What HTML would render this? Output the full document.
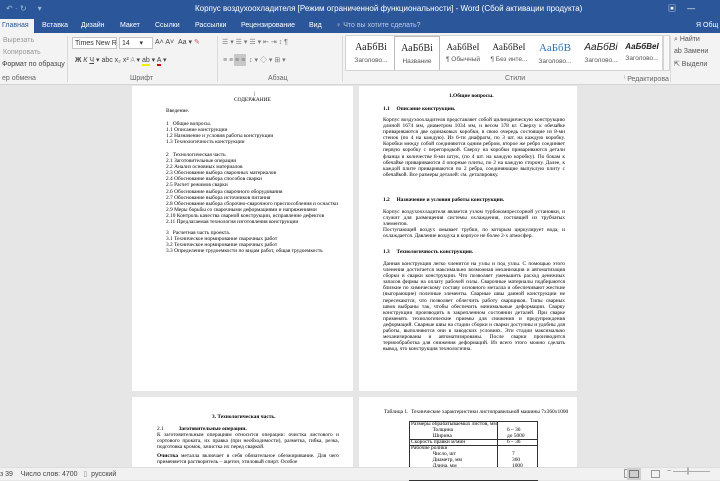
<!DOCTYPE html>
<html><head><meta charset="utf-8"><style>
*{margin:0;padding:0;box-sizing:border-box}
body{width:720px;height:480px;overflow:hidden;background:#e6e6e6;font-family:"Liberation Sans","Noto Sans CJK SC",sans-serif;position:relative}
.a{position:absolute;white-space:nowrap}
#title{position:absolute;left:0;top:0;width:720px;height:33px;background:#2b579a}
#ribbon{position:absolute;left:0;top:33px;width:720px;height:52px;background:#f3f3f3;border-bottom:1px solid #d5d5d5}
.w{color:#fff;font-size:8px}
.r{color:#444;font-size:7px}
.g{color:#666;font-size:7px}
.page{position:absolute;background:#fff;font-family:"Liberation Serif",serif;color:#000;font-size:5.4px;line-height:6.1px}
.page p{position:absolute;white-space:nowrap}
.j{white-space:normal!important;text-align:justify;text-align-last:left}
.b{font-weight:bold}
#status{position:absolute;left:0;top:467px;width:720px;height:13px;background:#f1f1f1;border-top:1px solid #ddd;font-size:7px;color:#444}
.sty{position:absolute;top:0;width:46px;height:36px;text-align:center;overflow:hidden;white-space:nowrap}
.sty .s1{font-family:"Liberation Serif",serif;font-size:10px;margin-top:6px;color:#222}
.sty .s2{font-size:6.5px;color:#555;margin-top:4px}
.sep{position:absolute;top:36px;width:1px;height:46px;background:#dadada}
.box{position:absolute;background:#fff;border:1px solid #c6c6c6;font-size:7px;color:#333;padding:1px 2px;white-space:nowrap;overflow:hidden}
</style></head><body>
<div id="title">
<div class="a w" style="left:6px;top:4px;color:#9fb5d8">↶ · ↻ &nbsp;&nbsp;&nbsp; ▾</div>
<div class="a w" style="left:195px;top:4px">Корпус воздухоохладителя [Режим ограниченной функциональности] - Word (Сбой активации продукта)</div>
<div class="a w" style="left:668px;top:3px">▣ &nbsp;&nbsp;&nbsp;&nbsp;—</div>
<div class="a" style="left:0;top:19px;width:34px;height:14px;background:#f3f3f3"></div>
<div class="a" style="left:2px;top:22px;font-size:7px;color:#2b579a">Главная</div>
<div class="a w" style="left:42px;top:22px;font-size:7px">Вставка</div>
<div class="a w" style="left:81px;top:22px;font-size:7px">Дизайн</div>
<div class="a w" style="left:120px;top:22px;font-size:7px">Макет</div>
<div class="a w" style="left:155px;top:22px;font-size:7px">Ссылки</div>
<div class="a w" style="left:195px;top:22px;font-size:7px">Рассылки</div>
<div class="a w" style="left:241px;top:22px;font-size:7px">Рецензирование</div>
<div class="a w" style="left:309px;top:22px;font-size:7px">Вид</div>
<div class="a w" style="left:336px;top:22px;font-size:7px;color:#bccbe4">♀ Что вы хотите сделать?</div>
<div class="a w" style="left:696px;top:22px;font-size:7px">Я Общ</div>
</div>
<div id="ribbon">
<div class="a g" style="left:3px;top:4px;color:#999">Вырезать</div>
<div class="a g" style="left:3px;top:16px;color:#999">Копировать</div>
<div class="a r" style="left:2px;top:28px">Формат по образцу</div>
<div class="box" style="left:72px;top:4px;width:45px;height:12px">Times New R ▾</div>
<div class="box" style="left:119px;top:4px;width:34px;height:12px">14 &nbsp;&nbsp;&nbsp;&nbsp;▾</div>
<div class="a r" style="left:155px;top:5px;font-size:7px">A˄ A˅ &nbsp;Aa ▾ <span style="color:#c55">✎</span></div>
<div class="a r" style="left:75px;top:23px;font-size:7px"><b>Ж</b> <i>К</i> <u>Ч</u> ▾ abc x₂ x² <span style="color:#aaa">A</span> ▾ <span style="border-bottom:2px solid #ee0">ab</span> ▾ <span style="border-bottom:2px solid #d00">A</span> ▾</div>
<div class="a r" style="left:222px;top:5px;font-size:7px;color:#777">☰ ▾ ☰ ▾ ☰ ▾ ⇤ ⇥ ↕ ¶</div>
<div class="a" style="left:234px;top:21px;width:12px;height:12px;background:#c8c8c8"></div>
<div class="a r" style="left:223px;top:22px;font-size:7px;color:#777">≡ ≡ ≡ ≡ &nbsp;↕ ▾ ◇ ▾ ⊞ ▾</div>
<div class="a" style="left:345px;top:2px;width:318px;height:36px;background:#fff;border:1px solid #d4d4d4;overflow:hidden">
<div class="sty" style="left:2px"><div class="s1">АаБбВі</div><div class="s2">Заголово...</div></div>
<div class="sty" style="left:48px;border:1px solid #bbb"><div class="s1">АаБбВі</div><div class="s2">Название</div></div>
<div class="sty" style="left:94px"><div class="s1" style="font-size:9px">АаБбВеІ</div><div class="s2">¶ Обычный</div></div>
<div class="sty" style="left:140px"><div class="s1" style="font-size:9px">АаБбВеІ</div><div class="s2">¶ Без инте...</div></div>
<div class="sty" style="left:186px"><div class="s1" style="color:#2e74b5;font-size:11px">АаБбВ</div><div class="s2">Заголово...</div></div>
<div class="sty" style="left:232px"><div class="s1" style="font-family:'Liberation Sans';font-style:italic">АаБбВі</div><div class="s2">Заголово...</div></div>
<div class="sty" style="left:276px;width:40px"><div class="s1" style="font-family:'Liberation Sans';font-style:italic;font-weight:bold;font-size:8px">АаБбВеІ</div><div class="s2">Заголово...</div></div>
</div>
<div class="a" style="left:663px;top:2px;width:7px;height:36px;border:1px solid #d4d4d4;background:#f8f8f8"></div>
<div class="a r" style="left:674px;top:3px;color:#555">⌕ Найти</div>
<div class="a r" style="left:674px;top:15px;color:#555">ab Замени</div>
<div class="a r" style="left:674px;top:27px;color:#555">⇱ Выдели</div>
<div class="a g" style="left:2px;top:42px">ер обмена</div>
<div class="a g" style="left:130px;top:42px">Шрифт</div>
<div class="a g" style="left:268px;top:42px">Абзац</div>
<div class="a g" style="left:505px;top:42px">Стили</div>
<div class="a g" style="left:624px;top:42px">ⁱ Редактирова</div>
</div>
<div class="sep" style="left:67px;top:36px"></div>
<div class="sep" style="left:217px;top:36px"></div>
<div class="sep" style="left:342px;top:36px"></div>
<div class="sep" style="left:670px;top:36px"></div>

<div class="page" style="left:132px;top:86px;width:221px;height:305px">
<p style="left:122px;top:5px">|</p>
<p style="left:102px;top:11px">СОДЕРЖАНИЕ</p>
<p style="left:34px;top:22px">Введение.</p>
<p style="left:34px;top:35px">1 &nbsp;&nbsp;Общие вопросы.<br>1.1 Описание конструкции<br>1.2 Назначение и условия работы конструкции<br>1.3 Технологичность конструкции</p>
<p style="left:34px;top:66px">2 &nbsp;&nbsp;Технологическая часть<br>2.1 Заготовительные операции<br>2.2 Анализ основных материалов<br>2.3 Обоснование выбора сварочных материалов<br>2.4 Обоснование выбора способов сварки<br>2.5 Расчет режимов сварки<br>2.6 Обоснование выбора сварочного оборудования<br>2.7 Обоснование выбора источников питания<br>2.8 Обоснование выбора сборочно-сварочного приспособления и оснастки<br>2.9 Меры борьбы со сварочными деформациями и напряжениями<br>2.10 Контроль качества сварной конструкции, исправление дефектов<br>2.11 Предлагаемая технология изготовления конструкции</p>
<p style="left:34px;top:144px">3 &nbsp;&nbsp;Расчетная часть проекта.<br>3.1 Техническое нормирование сварочных работ<br>3.2 Техническое нормирование сварочных работ<br>3.3 Определение трудоемкости по видам работ, общая трудоемкость</p>
</div>

<div class="page" style="left:359px;top:86px;width:218px;height:305px">
<p class="b" style="left:90px;top:7px">1.Общие вопросы.</p>
<p class="b" style="left:24px;top:20px">1.1 &nbsp;&nbsp;&nbsp;&nbsp;Описание конструкции.</p>
<p class="j" style="left:24px;top:31px;width:182px">Корпус воздухоохладителя представляет собой цилиндрическую конструкцию длиной 1674 мм, диаметром 1034 мм, и весом 378 кг. Сверху к обечайке привариваются две одинаковых коробки, в свою очередь состоящие из 8-ми стенок (по 4 на каждую). Из 6-ти диафрагм, по 3 шт. на каждую коробку. Коробки между собой соединяются одним ребром, второе же ребро соединяет первую коробку с перегородкой. Сверху на коробки привариваются детали фланца в количестве 8-ми штук, (по 4 шт. на каждую коробку). По бокам к обечайке привариваются 4 опорные плиты, по 2 на каждую сторону. Далее, к каждой плите привариваются по 2 ребра, соединяющие выпуклую плиту с обечайкой. Все размеры деталей: см. деталировку.</p>
<p class="b" style="left:24px;top:111px">1.2 &nbsp;&nbsp;&nbsp;&nbsp;Назначение и условия работы конструкции.</p>
<p class="j" style="left:24px;top:123px;width:182px">Корпус воздухоохладителя является узлом турбокомпрессорной установки, и служит для размещения системы охлаждения, состоящей из трубчатых элементов.<br>Поступающий воздух омывает трубки, по которым циркулирует вода, и охлаждается. Давление воздуха в корпусе не более 2-х атмосфер.</p>
<p class="b" style="left:24px;top:163px">1.3 &nbsp;&nbsp;&nbsp;&nbsp;Технологичность конструкции.</p>
<p class="j" style="left:24px;top:175px;width:182px">Данная конструкция легко членится на узлы и под узлы. С помощью этого членения достигается максимально возможная механизация и автоматизация сборки и сварки конструкции. Что позволяет уменьшить расход денежных запасов фирмы на оплату рабочей силы. Сварочные материалы подбираются близкие по химическому составу основного металла и обеспечивают жесткие (выгорающие) полезные элементы. Сварные швы данной конструкции не пересекаются, что позволяет облегчить работу сварщиков. Типы сварных швов выбраны так, чтобы обеспечить минимальные деформации. Сварку конструкции производить в закрепленном состоянии деталей. При сварке применять технологические приемы для снижения и предупреждения деформаций. Сварные швы на стадии сборки и сварки доступны и удобны для работы, выполняются они в заводских условиях. Эти стадии максимально механизированы и автоматизированы. После сварки производится термообработка для снижения деформаций. Из всего этого можно сделать вывод, что конструкция технологична.</p>
</div>

<div class="page" style="left:132px;top:397px;width:221px;height:80px">
<p class="b" style="left:80px;top:17px">3. Технологическая часть.</p>
<p style="left:25px;top:29px">2.1 &nbsp;&nbsp;&nbsp;&nbsp;&nbsp;&nbsp;&nbsp;&nbsp;&nbsp;&nbsp;<b>Заготовительные операции.</b></p>
<p class="j" style="left:25px;top:35px;width:182px">К заготовительным операциям относится операции: очистка листового и сортового проката, их правка (при необходимости), разметка, гибка, резка, подготовка кромок, зачистка их перед сваркой.</p>
<p class="j" style="left:25px;top:56px;width:182px"><b>Очистка</b> металла включает в себя обязательное обезжиривание. Для чего применяется растворитель – ацетон, этиловый спирт. Особое</p>
</div>

<div class="page" style="left:359px;top:397px;width:218px;height:80px">
<p style="left:25px;top:12px">Таблица 1. &nbsp;Технические характеристики листоправильной машины 7x360x1000</p>
<div style="position:absolute;left:50px;top:24px;width:129px;height:60px;border:1px solid #333"></div>
<div style="position:absolute;left:138px;top:24px;width:1px;height:60px;background:#333"></div>
<div style="position:absolute;left:50px;top:42px;width:129px;height:1px;background:#333"></div>
<div style="position:absolute;left:50px;top:48px;width:129px;height:1px;background:#333"></div>
<p style="left:52px;top:24px">Размеры обрабатываемых листов, мм<br>&nbsp;&nbsp;&nbsp;&nbsp;&nbsp;&nbsp;&nbsp;&nbsp;&nbsp;&nbsp;&nbsp;&nbsp;&nbsp;&nbsp;&nbsp;&nbsp;Толщина<br>&nbsp;&nbsp;&nbsp;&nbsp;&nbsp;&nbsp;&nbsp;&nbsp;&nbsp;&nbsp;&nbsp;&nbsp;&nbsp;&nbsp;&nbsp;&nbsp;Ширина</p>
<p style="left:148px;top:30px">6 – 36<br>до 5000</p>
<p style="left:52px;top:42px">Скорость правки м/мин</p><p style="left:148px;top:42px">6 – 36</p>
<p style="left:52px;top:48px">Рабочие ролики<br>&nbsp;&nbsp;&nbsp;&nbsp;&nbsp;&nbsp;&nbsp;&nbsp;&nbsp;&nbsp;&nbsp;&nbsp;&nbsp;&nbsp;&nbsp;&nbsp;Число, шт<br>&nbsp;&nbsp;&nbsp;&nbsp;&nbsp;&nbsp;&nbsp;&nbsp;&nbsp;&nbsp;&nbsp;&nbsp;&nbsp;&nbsp;&nbsp;&nbsp;Диаметр, мм<br>&nbsp;&nbsp;&nbsp;&nbsp;&nbsp;&nbsp;&nbsp;&nbsp;&nbsp;&nbsp;&nbsp;&nbsp;&nbsp;&nbsp;&nbsp;&nbsp;Длина, мм</p>
<p style="left:153px;top:54px">7<br>360<br>1000</p>
</div>

<div id="status">
<div class="a" style="left:0;top:2px">з 39 &nbsp;&nbsp;&nbsp;Число слов: 4700 &nbsp;&nbsp;<span style="color:#888">▯</span> &nbsp;русский</div>
<div class="a" style="left:624px;top:1px;width:10px;height:9px;border:1px solid #999"></div>
<div class="a" style="left:627px;top:0;width:14px;height:12px;background:#cfcfcf"></div>
<div class="a" style="left:629px;top:2px;width:10px;height:8px;border:1px solid #777"></div>
<div class="a" style="left:651px;top:2px;width:9px;height:8px;border:1px solid #999"></div>
<div class="a" style="left:667px;top:0;color:#666">− ——<b>|</b>———</div>
</div>
</body></html>
